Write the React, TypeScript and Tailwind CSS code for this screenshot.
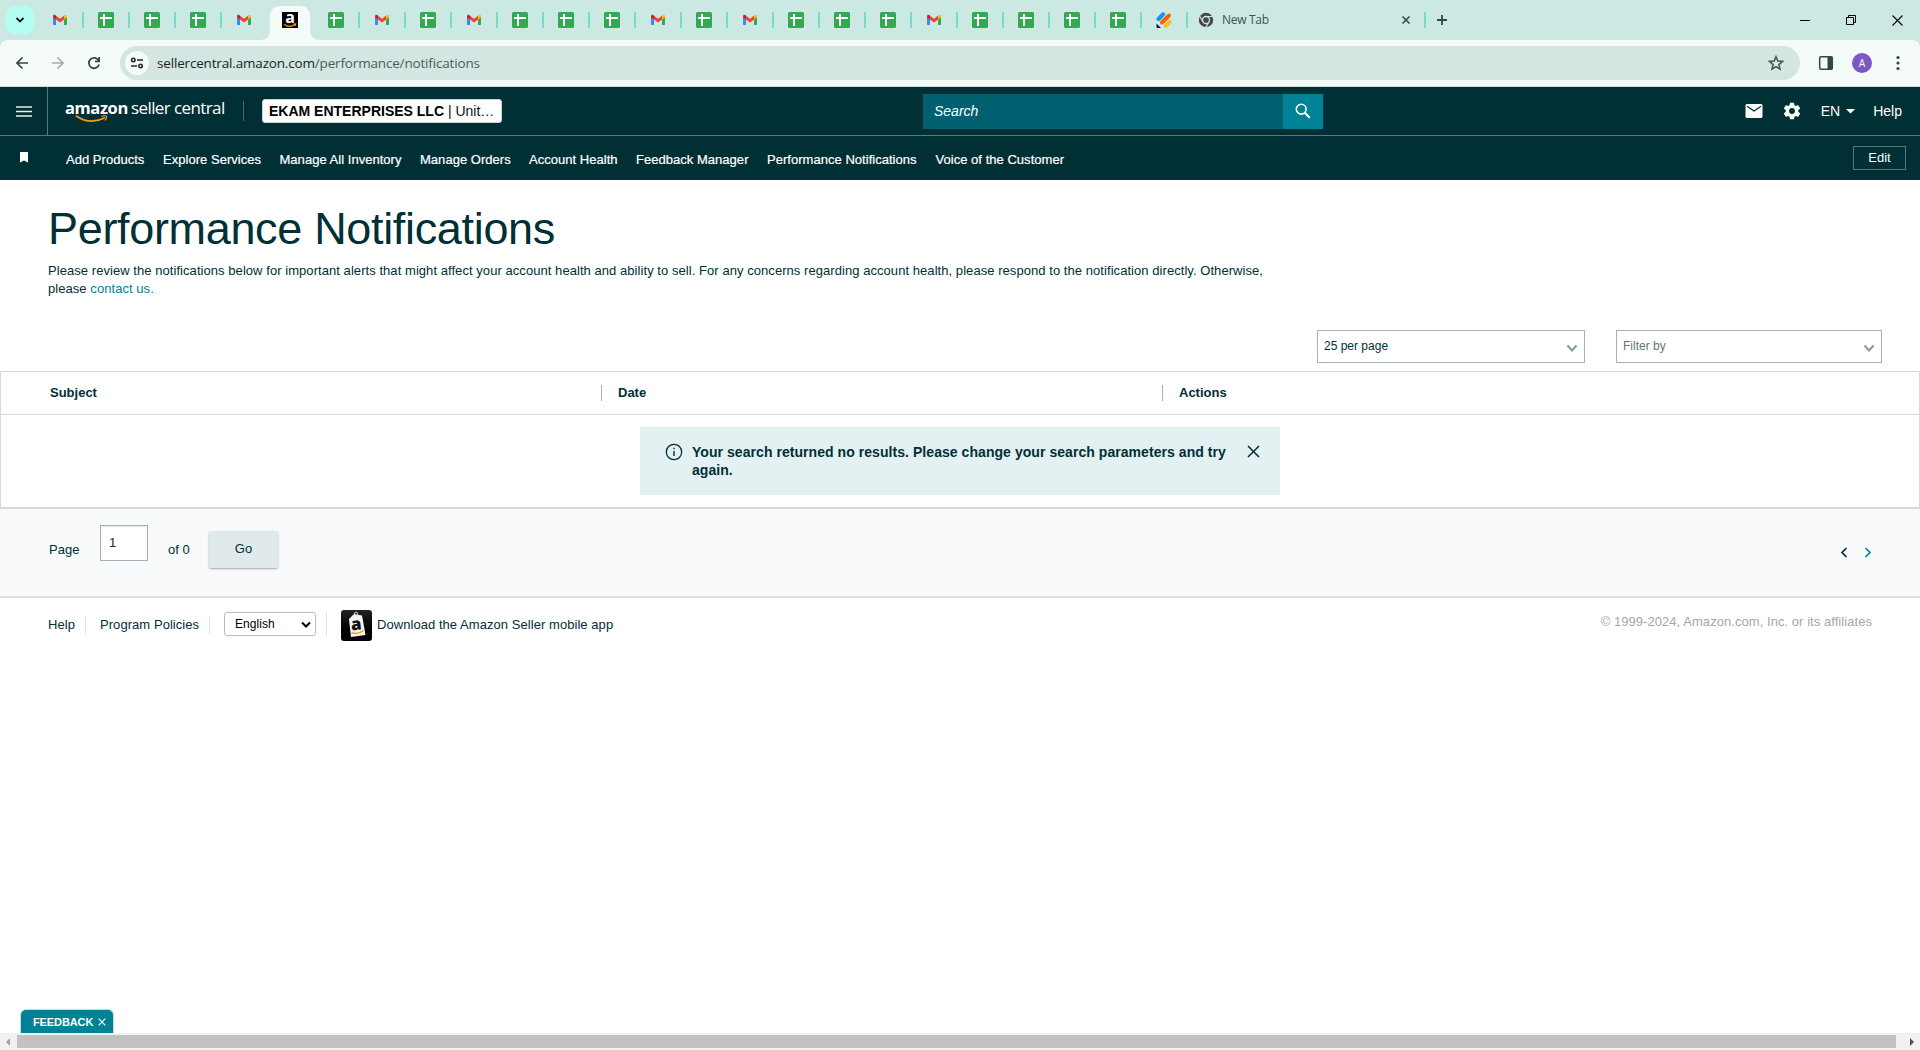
import React from 'react';

const tabs = ['gmail', 'sheets', 'sheets', 'sheets', 'gmail', 'amazon', 'sheets', 'gmail', 'sheets', 'gmail', 'sheets', 'sheets', 'sheets', 'gmail', 'sheets', 'gmail', 'sheets', 'sheets', 'sheets', 'gmail', 'sheets', 'sheets', 'sheets', 'sheets', 'stripes'];

const navLinks = [
  { label: 'Add Products', width: 'w-[97px]' },
  { label: 'Explore Services', width: 'w-[116.5px]' },
  { label: 'Manage All Inventory', width: 'w-[140.5px]' },
  { label: 'Manage Orders', width: 'w-[109px]' },
  { label: 'Account Health', width: 'w-[107px]' },
  { label: 'Feedback Manager', width: 'w-[131px]' },
  { label: 'Performance Notifications', width: 'w-[168.5px]' },
  { label: 'Voice of the Customer', width: 'w-[140px]' },
];

function GmailIcon() {
  return (
    <svg width="16" height="16" viewBox="0 0 16 16">
      <path d="M1 4v8.3c0 .4.3.7.7.7H4V7z" fill="#4285f4" />
      <path d="M12 7v6h2.3c.4 0 .7-.3.7-.7V4z" fill="#34a853" />
      <path d="M12 4v3.6l3-2.3V4.2c0-1.4-1.4-2-2.4-1.1z" fill="#fbbc04" />
      <path d="M1 4.2v1.1l3 2.3V4l-.6-.9C2.4 2.2 1 2.8 1 4.2z" fill="#c5221f" />
      <path d="M4 7.6V3.7l4 3 4-3v3.9l-4 3z" fill="#ea4335" />
    </svg>
  );
}

function SheetsIcon() {
  return (
    <svg width="16" height="16" viewBox="0 0 16 16">
      <rect width="16" height="16" rx="1.6" fill="#34a853" />
      <path d="M2 5h12v2H7v7H5V7H2z" fill="#fff" />
      <path d="M5 2h2v4H5z" fill="#fff" />
    </svg>
  );
}

function AmazonIcon() {
  return (
    <span className="relative flex h-4 w-4 justify-center bg-black font-['Open_Sans',sans-serif] text-[16px] leading-[10px] font-bold text-white">
      a
      <svg className="absolute bottom-0 left-0" width="16" height="5" viewBox="0 0 16 5">
        <path d="M2 1.2Q7.5 5.5 13 1.5M11.5 1l2.3-.2-.5 2" fill="none" stroke="#f90" strokeWidth="1.1" />
      </svg>
    </span>
  );
}

function StripesIcon() {
  return (
    <svg width="16" height="16" viewBox="0 0 16 16">
      <g strokeWidth="4" strokeLinecap="round">
        <path d="M2.5 7 7 2.3" stroke="#0a99ff" />
        <path d="M6 10.5l7-7" stroke="#ff6100" />
        <path d="M9.8 13.8l3.7-3.6" stroke="#ffb629" />
      </g>
      <path d="M.5 11.5v3.7c0 .4.3.8.8.8H5z" fill="#0a1551" />
    </svg>
  );
}

function TabIcon({ type }: { type: string }) {
  if (type === 'gmail') return <GmailIcon />;
  if (type === 'amazon') return <AmazonIcon />;
  if (type === 'stripes') return <StripesIcon />;
  return <SheetsIcon />;
}

function ChromeIcon() {
  return (
    <svg width="16" height="16" viewBox="0 0 16 16">
      <circle cx="8" cy="8" r="7.2" fill="#474747" />
      <circle cx="8" cy="8" r="3.5" fill="none" stroke="#cce8e2" strokeWidth="1.3" />
      <path d="M8 4.5h6.5M5 9.8 1.7 4.2M11 9.8l-3.2 5.4" stroke="#cce8e2" strokeWidth="1.2" />
    </svg>
  );
}

function TabStrip() {
  return (
    <div className="flex h-10 items-center bg-[#cce8e2]">
      <div className="ml-[6px] flex h-7 w-7 items-center justify-center rounded-[10px] bg-[#b3fff3]">
        <svg width="10" height="8" viewBox="0 0 10 8">
          <path d="m1.5 2 3.5 3.5L8.5 2" fill="none" stroke="#111" strokeWidth="1.8" />
        </svg>
      </div>
      <div className="ml-[3px] flex h-10">
        {tabs.map((type, i) => (
          <div key={i} className="relative flex h-10 w-[46px] items-center justify-center">
            {type === 'amazon' && (
              <svg className="absolute bottom-0 -left-[7px]" width="60" height="34" viewBox="0 0 60 34">
                <path d="M0 34c6 0 10-4 10-10V10C10 4 14 0 20 0h20c6 0 10 4 10 10v14c0 6 4 10 10 10z" fill="#f5fbf9" />
              </svg>
            )}
            <span className="relative"><TabIcon type={type} /></span>
            {i !== 4 && i !== 5 && <span className="absolute top-3 -right-px h-4 w-[2px] bg-[#76dacb]" />}
          </div>
        ))}
      </div>
      <div className="flex h-10 w-[237px] items-center pr-[13px] pl-[11px]">
        <ChromeIcon />
        <span className="ml-2 flex-1 font-['Open_Sans',sans-serif] text-[12px] tracking-[-0.3px] text-[#3b5450]">New Tab</span>
        <svg width="10" height="10" viewBox="0 0 10 10">
          <path d="m1.5 1.5 7 7m0-7-7 7" stroke="#334b48" strokeWidth="1.6" />
        </svg>
      </div>
      <span className="h-4 w-[2px] bg-[#76dacb]" />
      <svg className="ml-[10px]" width="12" height="12" viewBox="0 0 12 12">
        <path d="M6 1v10M1 6h10" stroke="#334b48" strokeWidth="1.8" />
      </svg>
      <div className="mr-[17px] ml-auto flex items-center gap-9 text-black">
        <svg width="10" height="10" viewBox="0 0 10 10"><path d="M0 5.500h10" stroke="currentColor" /></svg>
        <svg width="10" height="10" viewBox="0 0 10 10" fill="none" stroke="currentColor">
          <path d="M.5 2.500h7v7h-7zM2.500 2V.5h7v7H8" />
        </svg>
        <svg width="11" height="11" viewBox="0 0 11 11"><path d="m.5.5 10 10m0-10-10 10" stroke="currentColor" strokeWidth="1.1" /></svg>
      </div>
    </div>
  );
}

function AddressBar() {
  return (
    <div className="bg-[#cce8e2]">
      <div className="flex h-[47px] items-center rounded-t-lg border-b border-[#cfe0dc] bg-[#f5fbf9]">
        <svg className="ml-4" width="12" height="12" viewBox="0 0 12 12" fill="none" stroke="#2f4a46" strokeWidth="1.6">
          <path d="M12 6H1M6.500.5 1 6l5.500 5.500" />
        </svg>
        <svg className="ml-6" width="12" height="12" viewBox="0 0 12 12" fill="none" stroke="#a3aeac" strokeWidth="1.6">
          <path d="M0 6h11M5.500.5 11 6l-5.500 5.500" />
        </svg>
        <svg className="ml-6" width="12" height="14" viewBox="0 0 12 14" fill="none" stroke="#2f4a46" strokeWidth="1.8">
          <path d="M10.800 4.800A5.200 5.200 0 1 0 11.100 8.500" />
          <path d="M11.200 1v4.300H7" />
        </svg>
        <div className="ml-5 flex h-[34px] w-[1680px] items-center rounded-full bg-[#d3e6e1] pl-[5px]">
          <div className="flex h-6 w-6 items-center justify-center rounded-full bg-[#f5fbf9]">
            <svg width="14" height="12" viewBox="0 0 14 12" fill="none" stroke="#1c2b29" strokeWidth="1.6">
              <circle cx="3.300" cy="3" r="1.700" />
              <path d="M7 3h6M1 9h6" />
              <circle cx="10.600" cy="9" r="1.700" />
            </svg>
          </div>
          <span className="ml-2 font-['Open_Sans',sans-serif] text-[13.5px] tracking-[-0.17px] whitespace-pre text-[#4b5e5b]">
            <span className="text-[#1a1f1e]">sellercentral.amazon.com</span>/performance/notifications
          </span>
          <svg className="mr-4 ml-auto" width="16" height="16" viewBox="0 0 16 16" fill="none" stroke="#46504e" strokeWidth="1.5">
            <path d="m8 1.700 1.800 4.400 4.700.4-3.600 3.100 1.100 4.600-4-2.500-4 2.500 1.100-4.600L1.500 6.500l4.700-.4z" />
          </svg>
        </div>
        <svg className="ml-[18px]" width="16" height="16" viewBox="0 0 16 16">
          <rect x="1.700" y="1.700" width="12.600" height="12.600" rx="1" fill="none" stroke="#2f4a46" strokeWidth="1.5" />
          <path d="M9.500 2H14v12H9.500z" fill="#2f4a46" />
        </svg>
        <span className="ml-[18px] flex h-5 w-5 items-center justify-center rounded-full bg-[#7e57c2] font-[Roboto,sans-serif] text-[10px] text-white">A</span>
        <svg className="ml-6" width="4" height="16" viewBox="0 0 4 16" fill="#2f4a46">
          <circle cx="2" cy="2.500" r="1.600" />
          <circle cx="2" cy="8" r="1.600" />
          <circle cx="2" cy="13.500" r="1.600" />
        </svg>
      </div>
    </div>
  );
}

function Logo() {
  return (
    <div className="relative ml-[17px] flex h-7 w-[161px] items-start font-['Open_Sans',sans-serif] leading-[22px] whitespace-nowrap text-white">
      <span className="w-[66px] text-[16.5px] font-bold tracking-[-0.4px]">amazon</span>
      <span className="text-[17px] tracking-[-0.6px]">seller central</span>
      <svg className="absolute top-[18px] left-[10px]" width="34" height="9" viewBox="0 0 34 9" fill="none" stroke="#f7981f">
        <path d="M.8.8Q15 10.500 30 2.800" strokeWidth="1.7" />
        <path d="M26.500 1.300q4.200-1 4.900 0t-1.200 4.200" strokeWidth="1.2" />
      </svg>
    </div>
  );
}

function Header() {
  return (
    <header className="bg-[#002f36] text-white">
      <div className="flex h-[49px] items-center border-b border-[#5c777b]">
        <div className="flex h-[48px] w-12 items-center justify-center border-r border-[#5c777b]">
          <svg width="16" height="11" viewBox="0 0 16 11"><path d="M0 1h16M0 5.500h16M0 10h16" stroke="#e8ecec" strokeWidth="1.5" /></svg>
        </div>
        <Logo />
        <span className="ml-[17px] h-5 w-px bg-[#4a666a]" />
        <div className="ml-[18px] flex h-6 w-60 items-center rounded-[3px] border border-[#c9d2d3] bg-white pl-[6px] text-[14px] whitespace-pre text-[#111]">
          <b className="text-black">EKAM ENTERPRISES LLC</b> | Unit…
        </div>
        <div className="ml-[421px] flex h-[35px] w-[400px]">
          <div className="flex flex-1 items-center bg-[#00606f] pl-[11px] text-[14px] italic">Search</div>
          <div className="flex w-10 items-center justify-center bg-[#008296]">
            <svg className="-mt-px" width="16" height="16" viewBox="0 0 16 16" fill="none" stroke="#fff">
              <circle cx="6.200" cy="6.200" r="4.900" strokeWidth="1.6" />
              <path d="m9.800 9.800 5 5" strokeWidth="2.2" />
            </svg>
          </div>
        </div>
        <div className="mr-[18px] ml-auto flex items-center text-[14px]">
          <svg width="18" height="14" viewBox="0 0 18 14">
            <rect x=".5" width="17" height="14" rx="1.5" fill="#fff" />
            <path d="m2 2.300 7 4.700 7-4.700" fill="none" stroke="#002f36" strokeWidth="1.3" />
          </svg>
          <svg className="ml-[19px]" width="20" height="20" viewBox="0 0 24 24" fill="#fff">
            <path d="M19.430 12.980c.04-.32.070-.64.070-.98s-.03-.66-.07-.98l2.110-1.650c.19-.15.240-.42.120-.64l-2-3.460c-.12-.22-.39-.3-.61-.22l-2.490 1c-.52-.4-1.080-.73-1.690-.98l-.38-2.650A.488.488 0 0 0 14 2h-4c-.25 0-.46.180-.49.420l-.38 2.650c-.61.250-1.170.590-1.690.980l-2.490-1c-.23-.09-.49 0-.61.220l-2 3.460c-.13.220-.07.490.12.640l2.110 1.650c-.04.320-.07.650-.07.980s.03.660.07.980l-2.110 1.650c-.19.150-.24.420-.12.640l2 3.460c.12.220.39.300.61.220l2.490-1c.52.400 1.080.730 1.690.980l.38 2.650c.03.240.24.420.49.420h4c.25 0 .46-.18.490-.42l.38-2.650c.61-.25 1.170-.59 1.690-.98l2.490 1c.23.090.49 0 .61-.22l2-3.460c.12-.22.070-.49-.12-.64zM12 15.500A3.500 3.500 0 1 1 12 8.500a3.500 3.500 0 0 1 0 7z" />
          </svg>
          <span className="ml-[19px]">EN</span>
          <svg className="ml-[6px]" width="9" height="5" viewBox="0 0 9 5"><path d="M0 0h9L4.500 4.500z" fill="#fff" /></svg>
          <span className="ml-[18px]">Help</span>
        </div>
      </div>
      <div className="flex h-11 items-center">
        <svg className="mt-[-1px] ml-5" width="8" height="11" viewBox="0 0 8 11"><path d="M0 0h8v10.500L4 8.500 0 10.500z" fill="#fff" /></svg>
        <nav className="mt-[4px] ml-[38px] flex text-[13px] tracking-[0.03px] text-white [-webkit-text-stroke:0.2px_white]">
          {navLinks.map((link) => (
            <a key={link.label} className={`${link.width} whitespace-nowrap`}>{link.label}</a>
          ))}
        </nav>
        <button className="mr-[14px] ml-auto h-6 w-[53px] border border-[#5c777b] pb-px text-[13px]">Edit</button>
      </div>
    </header>
  );
}

function Chevron() {
  return (
    <svg width="12" height="9" viewBox="0 0 12 9"><path d="m1.500 1.500 4.500 5 4.500-5" fill="none" stroke="#839a9b" strokeWidth="2" /></svg>
  );
}

function Notifications() {
  return (
    <main className="text-[#002f36]">
      <div className="h-[150px] pt-[23px] pl-12">
        <h1 className="text-[45px] leading-[52px] tracking-[-0.33px]">Performance Notifications</h1>
        <p className="mt-[7px] w-[1230px] text-[13px] leading-[18px] tracking-[0.057px]">
          Please review the notifications below for important alerts that might affect your account health and ability to sell. For any concerns regarding account health, please respond to the notification directly. Otherwise,
          <br />
          please <a className="text-[#008296]">contact us.</a>
        </p>
      </div>
      <div className="mr-[38px] flex h-[33px] justify-end gap-[31px] text-[12px]">
        <div className="flex w-[268px] items-center justify-between border border-[#a2b3b4] px-[6px]">
          <span className="mb-[2px]">25 per page</span>
          <span className="mt-[3px]"><Chevron /></span>
        </div>
        <div className="flex w-[266px] items-center justify-between border border-[#a2b3b4] px-[6px] text-[#5f7577]">
          <span className="mb-[2px]">Filter by</span>
          <span className="mt-[3px]"><Chevron /></span>
        </div>
      </div>
      <section className="mt-2 h-[138px] border border-b-2 border-[#d5dbdb]">
        <div className="flex h-[43px] items-center border-b border-[#d5dbdb] text-[13px] font-bold">
          <span className="w-[600px] pl-[49px]">Subject</span>
          <span className="flex h-4 w-[561px] items-center border-l border-[#a2b3b4] pl-4">Date</span>
          <span className="flex h-4 items-center border-l border-[#a2b3b4] pl-4">Actions</span>
        </div>
        <div className="mx-auto mt-[12px] flex h-[68px] w-[640px] items-start bg-[#e3f1f2] pt-4 pl-[25px]">
          <svg width="18" height="18" viewBox="0 0 18 18" fill="none" stroke="#002f36">
            <circle cx="9" cy="9" r="7.700" strokeWidth="1.3" />
            <path d="M9 8v5M9 4.800v1.500" strokeWidth="1.4" />
          </svg>
          <p className="ml-[9px] w-[556px] text-[14px] leading-[18px] font-bold tracking-[0.055px] whitespace-nowrap">
            Your search returned no results. Please change your search parameters and try<br />again.
          </p>
          <svg className="mt-[2px] -ml-px" width="13" height="13" viewBox="0 0 13 13"><path d="m1 1 11 11m0-11L1 12" stroke="#002f36" strokeWidth="1.5" /></svg>
        </div>
      </section>
      <section className="flex h-[89px] items-start border-b-2 border-[#dde1e4] bg-[#f8fafc] text-[13px]">
        <span className="mt-[31px] ml-[49px] w-[51px]">Page</span>
        <div className="mt-4 h-9 w-12 border border-[#a2b3b4] bg-white pt-[7px] pl-2 leading-[19px] shadow-[inset_0_1px_2px_rgba(0,0,0,0.12)]">1</div>
        <span className="mt-[31px] ml-5 w-[40px]">of 0</span>
        <button className="mt-[22px] ml-px h-[37px] w-[69px] rounded-[2px] bg-[#e1eaeb] pb-[2px] text-[13px] shadow-[0_1px_2px_rgba(0,0,0,0.35)]">Go</button>
        <div className="mt-[38px] mr-[48px] ml-auto flex gap-[16px]">
          <svg width="8" height="11" viewBox="0 0 8 11"><path d="M6.500 1 2 5.500 6.500 10" fill="none" stroke="#002f36" strokeWidth="1.7" /></svg>
          <svg width="8" height="11" viewBox="0 0 8 11"><path d="M1.500 1 6 5.500 1.500 10" fill="none" stroke="#008296" strokeWidth="1.7" /></svg>
        </div>
      </section>
    </main>
  );
}

function AppBadge() {
  return (
    <span className="flex h-[31px] w-[31px] items-center justify-center rounded-[3px] bg-gradient-to-b from-[#222] to-black">
      <svg width="31" height="31" viewBox="0 0 31 31">
        <path d="M8 9l5-5 8 1.500 3.500 19.500-14.500 2z" fill="#f7f7f5" />
        <path d="M14 6q-1.500-4 1-4t1 5" fill="none" stroke="#ddd" />
        <text x="10" y="20" fontFamily="Open Sans" fontWeight="800" fontSize="17" fill="#111" transform="rotate(-6 15 15)">a</text>
        <path d="M10.500 22.500q6.500 2.500 12-2" fill="none" stroke="#f90" strokeWidth="1.5" />
      </svg>
    </span>
  );
}

function Footer() {
  return (
    <footer className="flex h-[54px] items-center pl-12 text-[13px] tracking-[0.055px] text-[#002f36]">
      <span className="w-[37px]">Help</span>
      <span className="h-[18px] w-px bg-[#e0e4e4]" />
      <span className="ml-[14px] w-[109px] whitespace-nowrap">Program Policies</span>
      <span className="h-[18px] w-px bg-[#e0e4e4]" />
      <div className="mb-[2px] ml-[14px] flex h-6 w-[92px] items-center justify-between rounded-[3px] border border-[#bbb] pr-1 pl-[10px] text-[12px] text-black">
        English
        <svg width="10" height="7" viewBox="0 0 10 7"><path d="m1 1.500 4 4 4-4" fill="none" stroke="#000" strokeWidth="2" /></svg>
      </div>
      <span className="mb-[2px] ml-[10px] h-6 w-px bg-[#e0e4e4]" />
      <span className="ml-[14px]"><AppBadge /></span>
      <span className="ml-[5px]">Download the Amazon Seller mobile app</span>
      <span className="mr-[48px] mb-[6px] ml-auto text-[13px] text-[#a6a6a6]">© 1999-2024, Amazon.com, Inc. or its affiliates</span>
    </footer>
  );
}

function BottomBar() {
  return (
    <div className="mt-auto">
      <div className="ml-5 flex h-6 w-[94px] items-center rounded-t-[6px] border border-b-0 border-[#c5dcdf] bg-[#008296] pt-px pl-[12px] text-[11px] font-bold tracking-[-0.1px] text-white">
        FEEDBACK
        <svg className="ml-[5px]" width="8" height="8" viewBox="0 0 8 8"><path d="m.7.7 6.600 6.600m0-6.600L.7 7.300" stroke="#fff" strokeWidth="1.2" /></svg>
      </div>
      <div className="flex h-[17px] items-center bg-[#f1f1f1] px-[6px]">
        <svg width="4" height="8" viewBox="0 0 4 8"><path d="M4 0v8L0 4z" fill="#a3a3a3" /></svg>
        <span className="ml-[7px] h-[13px] w-[1879px] bg-[#c1c1c1]" />
        <svg className="ml-auto" width="4" height="8" viewBox="0 0 4 8"><path d="M0 0v8l4-4z" fill="#505050" /></svg>
      </div>
    </div>
  );
}

export default function App() {
  return (
    <div className="flex h-[1050px] w-[1920px] flex-col overflow-hidden bg-white font-['Liberation_Sans',Arial,sans-serif]">
      <TabStrip />
      <AddressBar />
      <Header />
      <Notifications />
      <Footer />
      <BottomBar />
    </div>
  );
}
